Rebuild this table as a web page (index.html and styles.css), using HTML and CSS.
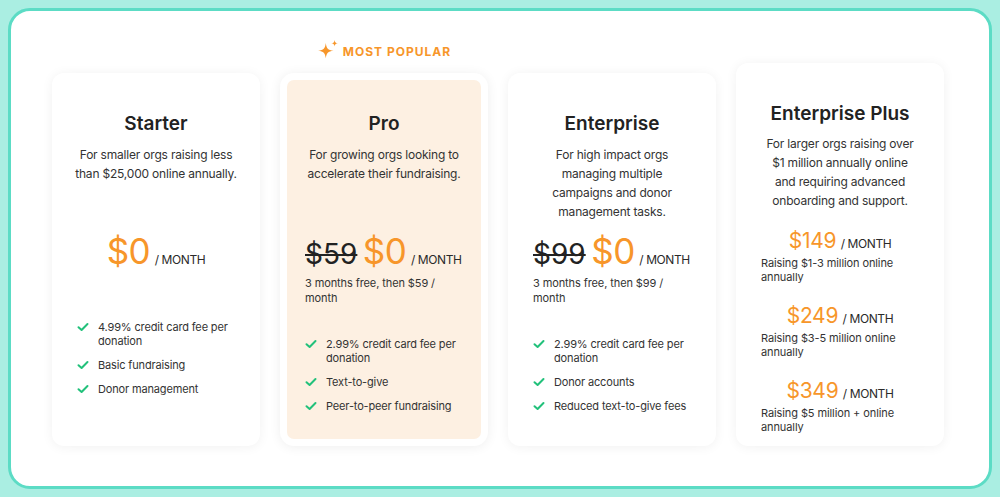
FILE: index.html
```html
<!DOCTYPE html>
<html lang="en">
<head>
<meta charset="utf-8">
<title>Pricing</title>
<link rel="stylesheet" href="styles.css">
</head>
<body>
<div class="frame">
  <div class="plans">
    <div class="card">
      <h2 class="title">Starter</h2>
      <p class="desc">For smaller orgs raising less than $25,000 online annually.</p>
      <div class="price"><span class="amount">$0</span> <span class="per">/ MONTH</span></div>
      <ul class="features features-plain">
        <li><svg class="check" viewBox="0 0 12 12"><polyline points="1.5,6.2 4.6,9 10.5,3"/></svg><span>4.99% credit card fee per donation</span></li>
        <li><svg class="check" viewBox="0 0 12 12"><polyline points="1.5,6.2 4.6,9 10.5,3"/></svg><span>Basic fundraising</span></li>
        <li><svg class="check" viewBox="0 0 12 12"><polyline points="1.5,6.2 4.6,9 10.5,3"/></svg><span>Donor management</span></li>
      </ul>
    </div>

    <div class="popular-col">
      <div class="popular-label">
        <svg class="sparkle" viewBox="0 0 20 18">
          <path d="M8 3.5 C8.7 8.6 9.9 9.8 15 10.5 C9.9 11.2 8.7 12.4 8 17.5 C7.3 12.4 6.1 11.2 1 10.5 C6.1 9.8 7.3 8.6 8 3.5 Z"/>
          <path d="M16 0.8 C16.35 3 16.8 3.45 19 3.8 C16.8 4.15 16.35 4.6 16 6.8 C15.65 4.6 15.2 4.15 13 3.8 C15.2 3.45 15.65 3 16 0.8 Z"/>
        </svg>
        <span>MOST POPULAR</span>
      </div>
      <div class="card card-pro">
        <h2 class="title">Pro</h2>
        <p class="desc">For growing orgs looking to accelerate their fundraising.</p>
        <div class="price price-left"><span class="old">$59</span> <span class="amount">$0</span> <span class="per">/ MONTH</span></div>
        <p class="note">3 months free, then $59 / month</p>
        <ul class="features">
          <li><svg class="check" viewBox="0 0 12 12"><polyline points="1.5,6.2 4.6,9 10.5,3"/></svg><span>2.99% credit card fee per donation</span></li>
          <li><svg class="check" viewBox="0 0 12 12"><polyline points="1.5,6.2 4.6,9 10.5,3"/></svg><span>Text-to-give</span></li>
          <li><svg class="check" viewBox="0 0 12 12"><polyline points="1.5,6.2 4.6,9 10.5,3"/></svg><span>Peer-to-peer fundraising</span></li>
        </ul>
      </div>
    </div>

    <div class="card">
      <h2 class="title">Enterprise</h2>
      <p class="desc">For high impact orgs managing multiple campaigns and donor management tasks.</p>
      <div class="price price-left"><span class="old">$99</span> <span class="amount">$0</span> <span class="per">/ MONTH</span></div>
      <p class="note">3 months free, then $99 / month</p>
      <ul class="features">
        <li><svg class="check" viewBox="0 0 12 12"><polyline points="1.5,6.2 4.6,9 10.5,3"/></svg><span>2.99% credit card fee per donation</span></li>
        <li><svg class="check" viewBox="0 0 12 12"><polyline points="1.5,6.2 4.6,9 10.5,3"/></svg><span>Donor accounts</span></li>
        <li><svg class="check" viewBox="0 0 12 12"><polyline points="1.5,6.2 4.6,9 10.5,3"/></svg><span>Reduced text-to-give fees</span></li>
      </ul>
    </div>

    <div class="card card-plus">
      <h2 class="title">Enterprise Plus</h2>
      <p class="desc">For larger orgs raising over $1 million annually online and requiring advanced onboarding and support.</p>
      <div class="tier">
        <div class="tier-price"><span class="tier-amount">$149</span> <span class="per">/ MONTH</span></div>
        <p class="tier-note">Raising $1-3 million online annually</p>
      </div>
      <div class="tier">
        <div class="tier-price"><span class="tier-amount">$249</span> <span class="per">/ MONTH</span></div>
        <p class="tier-note">Raising $3-5 million online annually</p>
      </div>
      <div class="tier">
        <div class="tier-price"><span class="tier-amount">$349</span> <span class="per">/ MONTH</span></div>
        <p class="tier-note">Raising $5 million + online annually</p>
      </div>
    </div>
  </div>
</div>
</body>
</html>
```

FILE: styles.css
```css
* { box-sizing: border-box; }

html, body {
  margin: 0;
  padding: 0;
}

body {
  background: #aaeee2;
  padding: 8px;
  height: 497px;
  font-family: Inter, "Noto Sans", sans-serif;
  color: #2a2a2a;
}

.frame {
  height: 481px;
  background: #ffffff;
  border: 3px solid #5cdcc5;
  border-radius: 22px;
  display: flex;
  align-items: flex-end;
  justify-content: center;
  padding: 0 4px 40px 0;
}

.plans {
  display: flex;
  align-items: flex-end;
  gap: 20px;
}

.card {
  width: 208px;
  min-height: 373px;
  background: #ffffff;
  border-radius: 12px;
  box-shadow: 0 1px 12px rgba(0, 0, 0, 0.06);
  padding: 39px 25px 20px;
  display: flex;
  flex-direction: column;
}

.title {
  margin: 0;
  font-size: 19px;
  line-height: 24px;
  font-weight: 600;
  color: #222222;
  text-align: center;
}

.desc {
  margin: 8.5px -3px 0;
  min-height: 76px;
  font-size: 12px;
  letter-spacing: -0.2px;
  line-height: 19px;
  color: #333333;
  text-align: center;
}

.price {
  margin-top: 8px;
  height: 44px;
  line-height: 44px;
  text-align: center;
  white-space: nowrap;
}

.price-left { text-align: left; }

.amount {
  font-size: 35px;
  color: #f7962a;
  font-weight: 400;
  letter-spacing: -0.5px;
}

.old {
  font-size: 28px;
  color: #222222;
  text-decoration: line-through;
  text-decoration-thickness: 2px;
  margin-right: 1px;
}

.per {
  font-size: 12px;
  letter-spacing: -0.4px;
  color: #2a2a2a;
}

.note {
  margin: 0;
  padding-top: 3px;
  font-size: 11px;
  letter-spacing: -0.1px;
  line-height: 15px;
  color: #333333;
}

.features {
  list-style: none;
  margin: 31px 0 0;
  padding: 0;
  display: flex;
  flex-direction: column;
  gap: 10px;
}

.features-plain { margin-top: 47px; }

.features li {
  display: flex;
  align-items: flex-start;
  gap: 9px;
  font-size: 11px;
  letter-spacing: -0.15px;
  line-height: 14px;
  color: #333333;
}

.check {
  flex: none;
  width: 12px;
  height: 12px;
  margin-top: 1px;
}

.check polyline {
  fill: none;
  stroke: #22c17b;
  stroke-width: 2;
  stroke-linecap: round;
  stroke-linejoin: round;
}

.popular-col {
  display: flex;
  flex-direction: column;
  align-items: center;
  gap: 14px;
}

.popular-label {
  display: flex;
  align-items: center;
  gap: 4px;
  height: 16px;
  color: #f7962a;
  font-size: 12px;
  font-weight: 700;
  letter-spacing: 1px;
}

.sparkle {
  width: 22px;
  height: 20px;
  fill: #f7962a;
  margin-top: -4px;
}

.card-pro {
  border: 7px solid #ffffff;
  background: #fdf0e2;
  padding: 32px 18px 13px;
  border-radius: 14px;
  box-shadow: 0 1px 12px rgba(0, 0, 0, 0.07);
}

.card-plus {
  min-height: 0;
  padding-bottom: 12px;
}

.card-plus .desc {
  margin: 8px 0 0;
  padding: 0 4px;
}

.tier { margin-top: 19px; }
.card-plus .desc + .tier { margin-top: 18.5px; }

.tier-price {
  height: 26px;
  line-height: 26px;
  text-align: center;
  white-space: nowrap;
}

.tier-amount {
  font-size: 21px;
  letter-spacing: -0.3px;
  color: #f7962a;
}

.tier-note {
  margin: 2px 0 0;
  font-size: 11px;
  letter-spacing: -0.1px;
  line-height: 14px;
  color: #333333;
}
```
